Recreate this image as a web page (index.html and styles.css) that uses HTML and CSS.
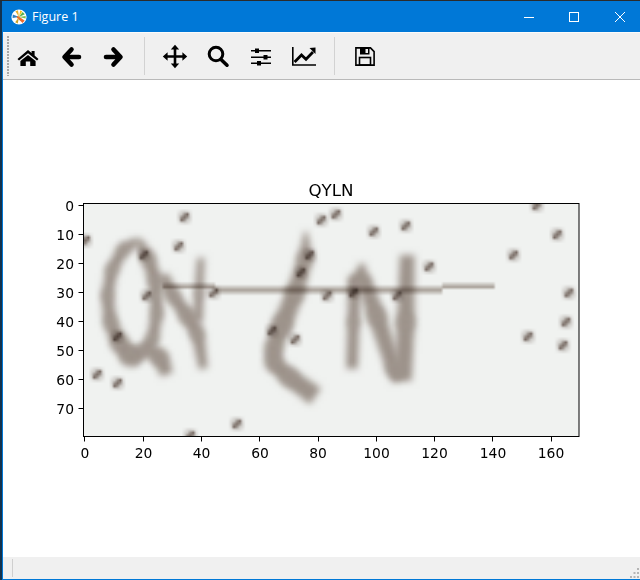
FILE: index.html
```html
<!DOCTYPE html>
<html lang="en">
<head>
<meta charset="utf-8">
<title>Figure 1</title>
<link rel="stylesheet" href="styles.css">
</head>
<body>
<div class="desktop">
<div class="window">
  <header class="titlebar">
    <svg class="app-icon" viewBox="0 0 16 16" width="16" height="16">
      <circle cx="8" cy="8" r="7.6" fill="#fff"/>
      <path d="M8 8L1.8 5.6L1.6 9Z" fill="#2f7fc1"/>
      <path d="M8 8L4.4 2.2L7 1.2Z" fill="#e9b22f"/>
      <path d="M8 8L9.2 1.6L11.2 2.2Z" fill="#f0c419"/>
      <path d="M8 8L11.6 3L13.8 5.2Z" fill="#58b04a"/>
      <path d="M8 8L14.6 7L14.6 9.6Z" fill="#7cc04f"/>
      <path d="M6.600 6.800L13.600 11.400L11.600 14L5.600 8.400Z" fill="#ef6b2a"/>
      <path d="M8 8L4.200 13.200L6.800 14.400Z" fill="#c9a227"/>
    </svg>
    <span class="title-text">Figure 1</span>
    <div class="win-controls">
      <svg class="win-btn" viewBox="0 0 46 20" width="46" height="20"><path d="M22 10.500H32" stroke="#fff" fill="none"/></svg>
      <svg class="win-btn" viewBox="0 0 46 20" width="46" height="20"><rect x="21.500" y="5.500" width="9" height="9" stroke="#fff" fill="none"/></svg>
      <svg class="win-btn" viewBox="0 0 46 20" width="46" height="20"><path d="M21 5L31 15M31 5L21 15" stroke="#fff" fill="none"/></svg>
    </div>
  </header>

  <nav class="toolbar">
    <div class="handle"></div>
    <div class="tools">
      <button class="tool" aria-label="Home"><svg viewBox="0 0 24 24" width="24" height="24"><path d="M12 6L15.600 9V7H18.600V11.600L22.500 15L21 16.600L12 9.200L3 16.600L1.500 15Z"/><path d="M12 11L19.600 17V22H14.200V17.400H9.800V22H4.400V17Z"/></svg></button>
      <button class="tool" aria-label="Back"><svg viewBox="0 0 24 24" width="24" height="24"><path class="thick" d="M12.500 5.500L5.500 13L12.500 20.500M6 13H20"/></svg></button>
      <button class="tool" aria-label="Forward"><svg viewBox="0 0 24 24" width="24" height="24"><path class="thick" d="M11.500 5.500L18.500 13L11.500 20.500M18 13H4"/></svg></button>
      <div class="sep"></div>
      <button class="tool" aria-label="Pan"><svg viewBox="0 0 24 24" width="24" height="24"><path class="shaft" d="M12 4V21M3 12.500H21"/><path d="M12 .8L16.200 5.600H7.800ZM12 24.200L16.200 19.400H7.800ZM-.2 12.500L4.600 8.300V16.700ZM24.200 12.500L19.400 8.300V16.700Z"/></svg></button>
      <button class="tool" aria-label="Zoom"><svg viewBox="0 0 24 24" width="24" height="24"><circle class="shaft lens" cx="10" cy="10" r="6.800"/><path class="handle-line" d="M15 15.500L21 21.200"/></svg></button>
      <button class="tool" aria-label="Subplots"><svg viewBox="0 0 24 24" width="24" height="24"><path class="fine" d="M2 6.700H22M2 13.300H22M2 19.300H22"/><rect x="6" y="4.500" width="4" height="4.500"/><rect x="14.500" y="11" width="4" height="4.500"/><rect x="8" y="17" width="4" height="4.500"/></svg></button>
      <button class="tool" aria-label="Axes"><svg viewBox="0 0 24 24" width="24" height="24"><path class="fine" d="M.8 3V21H24"/><path class="zig" d="M2.600 18L9.500 11L14 15.200L21 8"/><path d="M23.500 3.500V10L17.500 4Z"/></svg></button>
      <div class="sep"></div>
      <button class="tool" aria-label="Save"><svg viewBox="0 0 24 24" width="24" height="24"><path class="fine" d="M2.900 3.900H17.500L21.100 7.600V21.100H2.900Z"/><path d="M7 4H16.500V10.500H7ZM12.500 5V9H15V5Z" fill-rule="evenodd"/><rect class="fine" x="6.500" y="13.500" width="11" height="7.500"/></svg></button>
    </div>
  </nav>

  <main class="canvas">
    <svg class="figure" viewBox="3 80 637 477" width="637" height="477">
      <foreignObject x="84" y="204" width="495" height="233">
        <canvas xmlns="http://www.w3.org/1999/xhtml" id="captcha" class="captcha" width="170" height="80"></canvas>
      </foreignObject>
      <rect class="frame" x="83.500" y="203.500" width="495.500" height="233"/>
      <path class="ticks" d="M84.500 436.500v5M143.500 436.500v5M201.500 436.500v5M259.500 436.500v5M318.500 436.500v5M376.500 436.500v5M434.500 436.500v5M492.500 436.500v5M551.500 436.500v5M83.500 205.500h-5M83.500 234.500h-5M83.500 263.500h-5M83.500 292.500h-5M83.500 321.500h-5M83.500 350.500h-5M83.500 379.500h-5M83.500 408.500h-5"/>
      <text class="plot-title" x="331" y="196">QYLN</text>
      <g class="xlabels">
        <text x="85" y="458">0</text><text x="143.500" y="458">20</text><text x="201.500" y="458">40</text><text x="260" y="458">60</text><text x="318" y="458">80</text><text x="376.500" y="458">100</text><text x="434.500" y="458">120</text><text x="493" y="458">140</text><text x="551" y="458">160</text>
      </g>
      <g class="ylabels">
        <text x="74" y="210.500">0</text><text x="74" y="239.500">10</text><text x="74" y="268.500">20</text><text x="74" y="297.500">30</text><text x="74" y="326.500">40</text><text x="74" y="355.500">50</text><text x="74" y="384.500">60</text><text x="74" y="413.500">70</text>
      </g>
    </svg>
  </main>

  <footer class="statusbar">
    <div class="status-sep"></div>
    <svg class="grip" viewBox="0 0 12 12" width="12" height="12"><path d="M9 1h2v2H9zM5.500 5h2v2h-2zM9 5h2v2H9zM2 9h2v2H2zM5.500 9h2v2h-2zM9 9h2v2H9z"/></svg>
  </footer>
</div>
</div>
<script src="app.js"></script>
</body>
</html>
```
FILE: styles.css
```css
* { box-sizing: border-box; }
html, body { margin: 0; padding: 0; }
body { width: 640px; height: 580px; overflow: hidden; background: #fff; }

.desktop {
  width: 640px;
  height: 580px;
  background: #12324e;
  border-top: 1px solid #2b2b2b;
  padding-left: 2px;
}
.window {
  height: 579px;
  display: flex;
  flex-direction: column;
  background: #0078d7;
  border-left: 1px solid #0078d7;
  border-bottom: 1px solid #0078d7;
}

.titlebar {
  height: 31px;
  flex: none;
  display: flex;
  align-items: center;
  color: #fff;
  padding-left: 8px;
}
.app-icon { flex: none; }
.title-text { font: 12.5px "Open Sans", "Noto Sans", sans-serif; margin-left: 5px; }
.win-controls { margin-left: auto; display: flex; }
.win-btn { display: block; }

.toolbar {
  height: 48px;
  flex: none;
  display: flex;
  align-items: center;
  background: #f0f0f0;
  border-top: 1px solid #fbfbfb;
  border-bottom: 1px solid #b9b9b9;
  padding-left: 4px;
}
.handle {
  width: 3px;
  height: 40px;
  flex: none;
  background-image: radial-gradient(circle at 1px 1px, #a8a8a8 1px, transparent 1px);
  background-size: 3px 3px;
}
.tools { display: flex; align-items: center; gap: 7px; }
.tool {
  width: 36px;
  height: 38px;
  padding: 0;
  border: 0;
  background: none;
  display: flex;
  align-items: center;
  justify-content: center;
}
.tool svg { display: block; fill: #000; overflow: visible; }
.sep { width: 1px; height: 38px; background: #d2d2d2; margin: 0 5px; }
.thick { fill: none; stroke: #000; stroke-width: 4.6; stroke-linecap: round; stroke-linejoin: round; }
.shaft { fill: none; stroke: #000; stroke-width: 2.6; }
.lens { stroke-width: 3; }
.handle-line { fill: none; stroke: #000; stroke-width: 3.6; stroke-linecap: round; }
.fine { fill: none; stroke: #000; stroke-width: 1.6; }
.zig { fill: none; stroke: #000; stroke-width: 2.8; }

.canvas { flex: 1; min-height: 0; background: #fff; }
.figure { display: block; }
.captcha { display: block; width: 100%; height: 100%; }
.frame { fill: none; stroke: #000; stroke-width: 1; }
.ticks { fill: none; stroke: #000; stroke-width: 1; }
.plot-title, .xlabels text, .ylabels text { font-family: "DejaVu Sans", sans-serif; fill: #000; }
.plot-title { font-size: 16.67px; text-anchor: middle; }
.xlabels text { font-size: 13.89px; text-anchor: middle; }
.ylabels text { font-size: 13.89px; text-anchor: end; }

.statusbar {
  height: 22px;
  flex: none;
  display: flex;
  align-items: center;
  justify-content: space-between;
  background: #f0f0f0;
  padding-left: 9px;
}
.status-sep { width: 1px; height: 18px; background: #cfcfcf; }
.grip { align-self: flex-end; fill: #b5b5b5; display: block; }
```
FILE: app.js
```js
// Draws the 170x80 captcha bitmap that the figure shows with imshow.
var ctx = document.getElementById('captcha').getContext('2d');

var strokes = [
  // Q: bowl, then tail
  [[18,12,2.5],[13,15,4],[9,22,4],[7.5,31,4],[8.5,40,4.5],[11.5,47,5.5],[15.5,52,6.5],[20,50,4.5],[23,46,4],[24.5,37,4],[24,26,4.5],[21.5,18,4.5],[18,12,2.5]],
  [[21,49,3.5],[25.5,52,5.5],[28,58,4.5]],
  // Y: long diagonal, then short arm
  [[26.5,24,4],[30,31,4.5],[35,38,5],[38.5,44,4.5],[40.5,56,3]],
  [[39.6,18,2.5],[39,30,3],[38.5,40,3.5]],
  // L
  [[75.7,9,1],[75.5,18,5],[72,30,6],[67.5,41,6.5],[64.5,49,5.5],[64.5,54,5.5],[70,59,6],[79,65.5,6.5]],
  // N: left stem, shoulder, diagonal, right stem
  [[92.5,24,4.5],[92,40,4],[91.5,56,4]],
  [[95,20,2],[94,28,7]],
  [[95,24,5],[100,38,6],[106,56,5.5],[108,60,5]],
  [[110.5,17,5],[110,40,6],[109,60,6]]
];

var dots = [
  [34,4],[32,14],[0,12],[20,17],[21,31],[44,30],[81,5],[86,3],[77,17],[74,23],[83,31],
  [99,9],[110,7],[118,21],[92,30],[107,31],[147,17],[155,0],[162,10],[166,30],[165,40],
  [152,45],[164,48],[64,43],[72,46],[11,45],[4,58],[11,61],[52,75],[36,79]
];

var stamp = [
  [0.05,0.14,0.18,0.14,0.05],
  [0.14,0.25,0.60,0.85,0.14],
  [0.18,0.60,0.80,0.60,0.18],
  [0.14,0.85,0.60,0.25,0.14],
  [0.05,0.14,0.18,0.14,0.05]
];

// Tapered stroke: flat at both ends, rounded only where segments join.
function brush(points) {
  for (var i = 0; i < points.length - 1; i++) {
    var a = points[i], b = points[i + 1];
    var len = Math.hypot(b[0] - a[0], b[1] - a[1]);
    var nx = (a[1] - b[1]) / len, ny = (b[0] - a[0]) / len;
    ctx.beginPath();
    ctx.moveTo(a[0] + nx * a[2] / 2, a[1] + ny * a[2] / 2);
    ctx.lineTo(b[0] + nx * b[2] / 2, b[1] + ny * b[2] / 2);
    ctx.lineTo(b[0] - nx * b[2] / 2, b[1] - ny * b[2] / 2);
    ctx.lineTo(a[0] - nx * a[2] / 2, a[1] - ny * a[2] / 2);
    ctx.closePath();
    ctx.fill();
    if (i > 0) {
      ctx.beginPath();
      ctx.arc(a[0], a[1], a[2] / 2, 0, 7);
      ctx.fill();
    }
  }
}

ctx.fillStyle = '#f0f2f0';
ctx.fillRect(0, 0, 170, 80);

ctx.save();
ctx.translate(0.5, 0.5);
ctx.filter = 'blur(0.85px)';
ctx.fillStyle = '#9d938b';
strokes.forEach(brush);
ctx.restore();

ctx.globalCompositeOperation = 'multiply';

// Long horizontal stroke through the letters
ctx.fillStyle = 'rgba(150,135,125,0.7)';
ctx.fillRect(27, 28, 18, 1);
ctx.fillRect(45, 29, 78, 1);
ctx.fillRect(123, 28, 18, 1);
ctx.fillStyle = 'rgba(150,135,125,0.35)';
ctx.fillRect(27, 27, 18, 1);
ctx.fillRect(45, 28, 78, 1);
ctx.fillRect(45, 30, 78, 1);
ctx.fillRect(123, 27, 18, 1);

// Speckles
ctx.fillStyle = 'rgb(105,88,80)';
dots.forEach(function (d) {
  stamp.forEach(function (row, y) {
    row.forEach(function (alpha, x) {
      ctx.globalAlpha = alpha;
      ctx.fillRect(d[0] + x - 2, d[1] + y - 2, 1, 1);
    });
  });
});
```
